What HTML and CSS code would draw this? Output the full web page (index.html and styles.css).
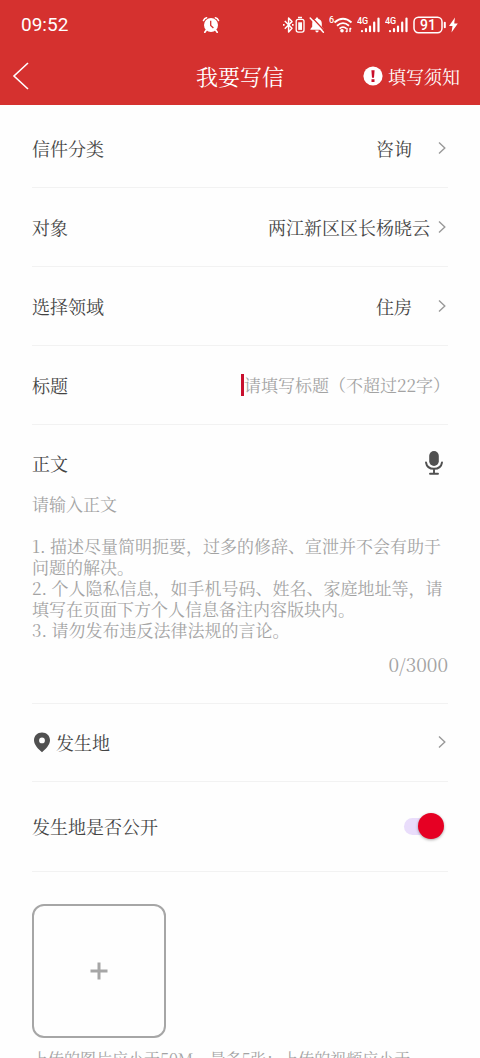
FILE: index.html
```html
<!DOCTYPE html>
<html lang="zh-CN">
<head>
<meta charset="utf-8">
<meta name="viewport" content="width=device-width, initial-scale=1">
<title>我要写信</title>
<link rel="stylesheet" href="styles.css">
</head>
<body>
<div class="screen">
  <header class="header">
    <div class="status">
      <time class="clock">09:52</time>
      <svg class="alarm" width="18" height="18" viewBox="0 0 18 18" fill="none" stroke="#fff">
        <circle cx="9" cy="9" r="7" fill="#fff" stroke="none"/>
        <path d="M1.500 4.500Q2.500 2.200 4.600 1.700M16.500 4.500Q15.500 2.200 13.400 1.700" stroke-width="1.600" stroke-linecap="round"/>
        <path d="M4.200 14.200 2.800 16.200M13.800 14.200l1.400 2" stroke-width="1.700" stroke-linecap="round"/>
        <path d="M8.700 4.800v4.600l2.700 2.500" stroke="#d5312f" stroke-width="1.300"/>
      </svg>
      <div class="indicators">
        <svg width="22" height="18" viewBox="0 0 22 18" fill="none" stroke="#fff">
          <path d="M1.800 5 9 12.200 5.600 16V2L9 5.600 1.800 12.800" stroke-width="1.500" stroke-linejoin="round"/>
          <path d="M0 8.900h1.600M9 8.900h1.600" stroke-width="1.600"/>
          <rect x="13.200" y="3.300" width="7.800" height="12.800" rx="2" stroke-width="1.300"/>
          <path d="M15 1.500h4" stroke-width="1.500"/>
          <rect x="15.200" y="6.300" width="3.800" height="7.600" fill="#fff" stroke="none"/>
        </svg>
        <svg width="16" height="18" viewBox="0 0 16 18">
          <path fill="#fff" d="M8 1.500c.8 0 1.200.5 1.200 1.200 2.400.6 3.600 2.400 3.600 4.800v3.200l1.800 2.200v.8H1.400v-.8l1.800-2.200V7.500c0-2.400 1.200-4.200 3.600-4.800C6.800 2 7.200 1.500 8 1.500zM6.300 14.500h3.400c0 1.100-.7 1.900-1.700 1.900s-1.700-.8-1.700-1.900z"/>
          <path d="M2.700 1.200 15.800 15" stroke="#d5312f" stroke-width="1.400"/>
          <path d="M1.200 2 14.400 16.300" stroke="#fff" stroke-width="1.500" stroke-linecap="round"/>
        </svg>
        <svg width="24" height="18" viewBox="0 0 24 18" fill="none" stroke="#fff">
          <text class="tiny" x="0" y="7">6</text>
          <path d="M5.500 6.500Q14 -1 22.500 6.500M8 9.700Q14 4.500 20 9.700M10.500 12.600Q14 9.700 17.500 12.600" stroke-width="1.800"/>
          <circle cx="13" cy="14.800" r="1.800" fill="#fff" stroke="none"/>
          <path d="M18 12v4M16.800 14.800 18 16.200M21 16v-4M22.200 13.200 21 12" stroke-width="1.300"/>
        </svg>
        <svg width="24" height="18" viewBox="0 0 24 18" fill="none" stroke="#fff" stroke-width="2.200" stroke-linecap="round">
          <text class="tiny" x="0" y="8">4G</text>
          <path d="M5 15v.2M9 13v2.200M13 10.500v4.700M17.200 6.500v8.700M21.500 2.500v12.700"/>
        </svg>
        <svg width="24" height="18" viewBox="0 0 24 18" fill="none" stroke="#fff" stroke-width="2.200" stroke-linecap="round">
          <text class="tiny" x="0" y="8">4G</text>
          <path d="M5 15v.2M9 13v2.200M13 10.500v4.700M17.200 6.500v8.700M21.500 2.500v12.700"/>
        </svg>
        <svg width="46" height="18" viewBox="0 0 46 18" fill="none" stroke="#fff">
          <rect x="1" y="1.200" width="28" height="15.600" rx="4.500" stroke-width="1.500"/>
          <path d="M31.800 6.800v4.400" stroke-width="2" stroke-linecap="round"/>
          <text class="charge" x="15" y="14" text-anchor="middle">91</text>
          <path d="M42 1.500 36 10h3.500L38.500 16.500 44.800 7.600h-3.600z" fill="#fff" stroke="none"/>
        </svg>
      </div>
    </div>
    <nav class="nav">
      <button class="back" type="button" aria-label="返回">
        <svg width="18" height="28" viewBox="0 0 18 28" fill="none" stroke="#fff" stroke-width="1.600"><path d="M16 1 2 14l14 13"/></svg>
      </button>
      <h1 class="title">我要写信</h1>
      <button class="notice" type="button">
        <svg width="20" height="20" viewBox="0 0 20 20"><circle cx="10" cy="10" r="9.600" fill="#fff"/><path d="M8.400 4.200h3.200l-.6 7.600H9zM8.500 13.300h3v2.700h-3z" fill="#c90f2b"/></svg>
        填写须知
      </button>
    </nav>
  </header>

  <main class="form">
    <button class="row" type="button">
      <span>信件分类</span><span class="value short">咨询</span>
      <svg class="arrow" width="12" height="14" viewBox="0 0 12 14"><path d="M3 1.500 8.800 7 3 12.500"/></svg>
    </button>
    <button class="row" type="button">
      <span>对象</span><span class="value">两江新区区长杨晓云</span>
      <svg class="arrow" width="12" height="14" viewBox="0 0 12 14"><path d="M3 1.500 8.800 7 3 12.500"/></svg>
    </button>
    <button class="row" type="button">
      <span>选择领域</span><span class="value short">住房</span>
      <svg class="arrow" width="12" height="14" viewBox="0 0 12 14"><path d="M3 1.500 8.800 7 3 12.500"/></svg>
    </button>
    <div class="row">
      <label for="subject">标题</label>
      <span class="caret"></span>
      <input class="subject" id="subject" type="text" placeholder="请填写标题（不超过22字）">
    </div>
    <section class="letter">
      <div class="letter-head">
        <label for="content">正文</label>
        <button class="mic" type="button" aria-label="语音输入">
          <svg width="20" height="26" viewBox="0 0 20 26" fill="none" stroke="#505050" stroke-width="1.900" stroke-linecap="round">
            <rect x="5.200" y="1" width="9.600" height="15" rx="4.800" fill="#505050" stroke="none"/>
            <path d="M2 12.500c.6 4 3.800 6.300 8 6.300s7.400-2.300 8-6.300M10 19v4.500M6 23.700h8"/>
          </svg>
        </button>
      </div>
      <textarea class="content" id="content" rows="7" placeholder="请输入正文&#10;&#10;1. 描述尽量简明扼要，过多的修辞、宣泄并不会有助于问题的解决。&#10;2. 个人隐私信息，如手机号码、姓名、家庭地址等，请填写在页面下方个人信息备注内容版块内。&#10;3. 请勿发布违反法律法规的言论。"></textarea>
      <div class="counter">0/3000</div>
    </section>
    <button class="row place" type="button">
      <svg width="20" height="22" viewBox="0 0 20 22"><path fill="#505050" fill-rule="evenodd" d="M10 1.500c4.600 0 8 3.400 8 7.700 0 4.800-4.600 9-8 12-3.400-3-8-7.200-8-12 0-4.300 3.400-7.700 8-7.700zm0 5a2.900 2.900 0 1 0 0 5.800 2.900 2.900 0 0 0 0-5.800z"/></svg>
      <span>发生地</span><span class="value"></span>
      <svg class="arrow" width="12" height="14" viewBox="0 0 12 14"><path d="M3 1.500 8.800 7 3 12.500"/></svg>
    </button>
    <div class="row public">
      <label for="public">发生地是否公开</label>
      <input class="switch" id="public" type="checkbox" role="switch" checked>
    </div>
    <section class="upload">
      <button class="add" type="button" aria-label="添加附件">
        <svg width="20" height="20" viewBox="0 0 20 20" stroke="#a6a6a6" stroke-width="3"><path d="M10 1.500v17M1.500 10h17"/></svg>
      </button>
      <p class="hint">上传的图片应小于50M，最多5张；上传的视频应小于</p>
    </section>
  </main>
</div>
</body>
</html>
```
FILE: styles.css
```css
* { box-sizing: border-box; }

body {
  margin: 0;
  background: #fefefe;
  color: #444;
  font: 18px/24px "Noto Serif CJK SC", "Noto Serif SC", "Liberation Serif", "Noto Sans CJK SC", serif;
}

button, input, textarea {
  margin: 0;
  padding: 0;
  border: 0;
  background: none;
  color: inherit;
  font: inherit;
}

svg { display: block; flex: none; }

.screen {
  display: flex;
  flex-direction: column;
  height: 100vh;
  overflow: hidden;
}

.header {
  flex: none;
  background: #d5312f;
  color: #fff;
}

.status {
  display: grid;
  grid-template-columns: 1fr auto 1fr;
  align-items: center;
  height: 49px;
  padding: 0 21px;
}

.clock { font: 400 19px/24px Roboto, sans-serif; }

.alarm { margin-right: 58px; }

.indicators {
  display: flex;
  justify-content: flex-end;
  gap: 4px;
}

.tiny { font: 500 9px Roboto, sans-serif; fill: #fff; stroke: none; }
.charge { font: 500 14px Roboto, sans-serif; fill: #fff; stroke: none; }

.nav {
  display: grid;
  grid-template-columns: 1fr auto 1fr;
  align-items: center;
  height: 56px;
  padding: 0 12px 2px;
}

.back { justify-self: start; }

.title {
  margin: 0;
  font-size: 22px;
  font-weight: 400;
}

.notice {
  display: flex;
  align-items: center;
  justify-self: end;
  gap: 5px;
  padding-right: 8px;
}

.form {
  flex: 1;
  min-height: 0;
  padding: 4px 32px 0;
  overflow: hidden;
}

.row {
  display: flex;
  align-items: center;
  width: 100%;
  height: 79px;
  padding-bottom: 1px;
  border-bottom: 1px solid #f2f2f2;
  text-align: left;
}

.value {
  flex: 1;
  margin-right: 6px;
  text-align: right;
}

.value.short { margin-right: 24px; }

.arrow {
  fill: none;
  stroke: #999;
  stroke-width: 1.4;
}

.caret {
  width: 3px;
  height: 22px;
  margin-left: auto;
  background: #c8102e;
}

.subject {
  width: 204px;
  font-size: 17px;
  text-align: right;
  outline: 0;
}

::placeholder { color: #a3a3a3; opacity: 1; }

.letter {
  padding-bottom: 27px;
  border-bottom: 1px solid #f2f2f2;
}

.letter-head {
  display: flex;
  align-items: center;
  justify-content: space-between;
  height: 68px;
  padding: 8px 4px 0 0;
}

.content {
  display: block;
  width: 100%;
  font-size: 17px;
  line-height: 21px;
  resize: none;
  overflow: hidden;
  outline: 0;
}

.counter {
  padding-top: 12px;
  color: #a3a3a3;
  font-size: 19px;
  text-align: right;
}

.place { gap: 4px; height: 78px; }
.place .value { margin-right: 2px; }

.public {
  justify-content: space-between;
  height: 90px;
}

.switch {
  display: flex;
  align-items: center;
  justify-content: flex-end;
  width: 38px;
  height: 17px;
  margin-right: 6px;
  border-radius: 9px;
  background: #e9ddfb;
  appearance: none;
}

.switch::before {
  content: "";
  flex: none;
  width: 26px;
  height: 26px;
  margin-right: -2px;
  border-radius: 50%;
  background: #e60023;
  box-shadow: 0 1px 3px rgba(0, 0, 0, .35);
}

.upload { padding-top: 32px; }

.add {
  display: grid;
  place-items: center;
  width: 134px;
  height: 134px;
  border: 2px solid #a6a6a6;
  border-radius: 12px;
}

.hint {
  margin: 9px 0 0;
  color: #a3a3a3;
  font-size: 16px;
}
```
